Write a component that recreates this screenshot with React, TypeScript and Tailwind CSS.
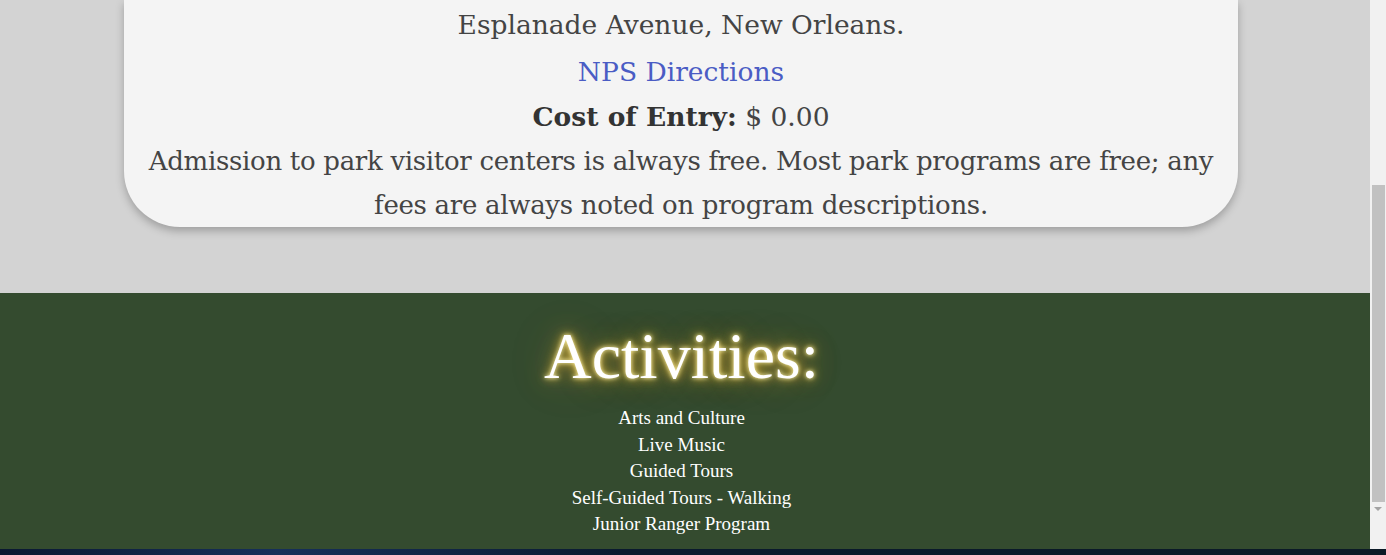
import React from 'react';

const activities = [
  'Arts and Culture',
  'Live Music',
  'Guided Tours',
  'Self-Guided Tours - Walking',
  'Junior Ranger Program',
];

export default function App() {
  return (
    <div className="w-[1386px] h-[555px] overflow-hidden flex flex-col bg-[#0b1a26]">
      <div className="flex h-[549px]">
        {/* Page */}
        <div className="flex-1 flex flex-col bg-[#d3d3d3] [font-family:'Liberation_Serif',serif]">
          {/* Park info card */}
          <div className="h-[293px] pr-[8px]">
            <div className="mx-auto w-[1114px] bg-[#f4f4f4] rounded-b-[56px] shadow-[0_4px_8px_rgba(0,0,0,0.25)] px-[8px] text-center text-[#444] text-[26.5px] leading-[45px] [font-family:'DejaVu_Serif',serif]">
              <p className="pt-[2px]">Esplanade Avenue, New Orleans.</p>
              <p className="pt-[2px]">
                <a href="#" className="text-[#4a5cc4]">NPS Directions</a>
              </p>
              <p>
                <span className="font-bold text-[#333]">Cost of Entry:</span> $ 0.00
              </p>
              <p className="leading-[44px] text-[26px] tracking-[-0.3px]">
                <span className="whitespace-nowrap">
                  Admission to park visitor centers is always free. Most park programs are free; any
                </span>
                <br />
                fees are always noted on program descriptions.
              </p>
            </div>
          </div>

          {/* Activities */}
          <div className="flex-1 bg-[#344b2f] text-center text-white pt-[28px] pr-[7px]">
            <h2 className="text-[66px] leading-[70px] [text-shadow:0_0_4px_#fff6b0,0_0_10px_#f2c640,0_0_22px_#b8902a,0_0_50px_rgba(190,110,70,0.3)]">
              Activities:
            </h2>
            <ul className="mt-[14px] text-[19px] leading-[26.5px]">
              {activities.map((a) => (
                <li key={a}>{a}</li>
              ))}
            </ul>
          </div>
        </div>

        {/* Scrollbar */}
        <div className="w-[16px] bg-[#f1f1f1] flex flex-col items-center">
          <div className="h-[185px]" />
          <div className="w-[13px] ml-[1px] h-[317px] bg-[#c1c1c1]" />
          <div className="mt-[5px] w-0 h-0 border-l-[4px] border-r-[4px] border-t-[4px] border-l-transparent border-r-transparent border-t-[#a3a3a3]" />
        </div>
      </div>
      <div className="flex-1 bg-[linear-gradient(90deg,#0a1830_0%,#16305a_20%,#0a1a2e_45%,#0b1a26_100%)]" />
    </div>
  );
}
